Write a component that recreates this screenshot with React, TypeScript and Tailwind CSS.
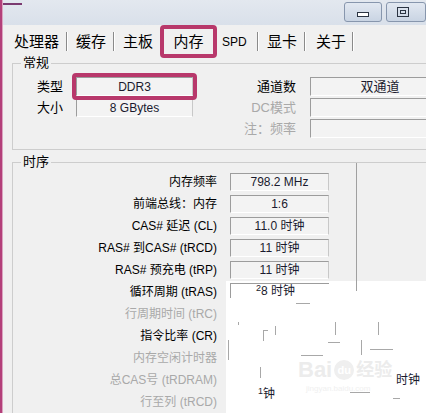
import React from "react";

const FONT = "font-['Liberation_Sans','Noto_Sans_CJK_SC',sans-serif]";

type Row = { l: string; v?: string; grey?: boolean };

const timing: Row[] = [
  { l: "内存频率", v: "798.2 MHz" },
  { l: "前端总线：内存", v: "1:6" },
  { l: "CAS# 延迟 (CL)", v: "11.0 时钟" },
  { l: "RAS# 到CAS# (tRCD)", v: "11 时钟" },
  { l: "RAS# 预充电 (tRP)", v: "11 时钟" },
  { l: "循环周期 (tRAS)" },
  { l: "行周期时间 (tRC)", grey: true },
  { l: "指令比率 (CR)" },
  { l: "内存空闲计时器", grey: true },
  { l: "总CAS号 (tRDRAM)", grey: true },
  { l: "行至列 (tRCD)", grey: true },
];

function Field({ children, w, h }: { children?: React.ReactNode; w: string; h: string }) {
  return (
    <div
      className={
        "flex items-center justify-center border-t border-l border-r border-b border-t-[#9c9c9c] border-l-[#9c9c9c] border-r-[#c8c8c8] border-b-white bg-[#f3f3f3] text-[12px] text-[#1a1a2e] " +
        w +
        " " +
        h
      }
    >
      {children}
    </div>
  );
}

function Sep() {
  return (
    <div className="flex shrink-0">
      <div className="w-px h-[19px] bg-[#8a8a8a]" />
      <div className="w-px h-[19px] bg-white" />
    </div>
  );
}

function Noise({ x, y, w, h }: { x: number; y: number; w: number; h: number }) {
  return (
    <div
      className="absolute bg-[#a8a8a8]"
      style={{ left: x, top: y, width: w, height: h }}
    />
  );
}

export default function App() {
  return (
    <div className={"w-[426px] h-[413px] overflow-hidden flex bg-[#f0f0f0] text-black " + FONT}>
      <div className="w-[3px] shrink-0 bg-[#b3407a] border-r border-[#dba3c0]" />
      <div className="flex-1 min-w-0 flex flex-col">
        {/* title bar */}
        <div className="h-[25px] shrink-0 flex items-start bg-gradient-to-b from-[#e3e8ef] to-[#d9e0ea]">
          <div className="mt-[3px] w-[19px] h-[2px] bg-[#7b3a70]" />
          <div className="flex-1" />
          <div className="mt-[2px] w-[38px] h-[20px] rounded-[3px] border border-[#8796ad] bg-gradient-to-b from-[#e2e8f1] to-[#c9d4e3] flex items-center justify-center">
            <div className="mt-[5px] w-[12px] h-[5px] border border-[#2b3442] bg-white" />
          </div>
          <div className="ml-[4px] mt-[2px] w-[40px] h-[20px] shrink-0 rounded-[3px] border border-[#8796ad] bg-gradient-to-b from-[#e2e8f1] to-[#c9d4e3] flex items-start justify-start">
            <div className="ml-[10px] mt-[4px] w-[12px] h-[10px] border border-[#2b3442] flex items-center justify-center">
              <div className="w-[6px] h-[4px] border border-[#2b3442]" />
            </div>
          </div>
        </div>

        {/* tabs */}
        <div className="h-[33px] shrink-0 flex items-center text-[15px] leading-none">
          <span className="ml-[11px] w-[49px]">处理器</span>
          <div className="ml-[3px]"><Sep /></div>
          <span className="ml-[8px] w-[31px]">缓存</span>
          <div className="ml-[6px]"><Sep /></div>
          <span className="ml-[8px] w-[31px]">主板</span>
          <div className="ml-[6px] w-[57px] h-[33px] shrink-0 rounded-[4px] border-[4px] border-[#b8386b] flex items-center justify-center">
            <span>内存</span>
          </div>
          <span className="ml-[5px] w-[24px] text-[12px]">SPD</span>
          <div className="ml-[11px]"><Sep /></div>
          <span className="ml-[8px] w-[30px]">显卡</span>
          <div className="ml-[7px]"><Sep /></div>
          <span className="ml-[10px] w-[30px]">关于</span>
          <div className="ml-[6px]"><Sep /></div>
        </div>

        {/* 常规 group */}
        <div className="relative ml-[9px] mt-[5px] w-[430px] h-[87px] shrink-0 border border-[#cdcdcd] pt-[13px]">
          <span className="absolute -top-[8px] left-[8px] px-[2px] bg-[#f0f0f0] text-[13px] leading-[14px]">常规</span>
          <div className="flex flex-col gap-[2px] text-[13px]">
            <div className="flex items-center h-[19px]">
              <span className="w-[50px] text-right">类型</span>
              <div className="relative ml-[13px]">
                <Field w="w-[117px]" h="h-[19px]">DDR3</Field>
                <div className="absolute -left-[4px] -top-[4px] w-[125px] h-[27px] rounded-[4px] border-[4px] border-[#b8386b]" />
              </div>
              <span className="w-[103px] text-right">通道数</span>
              <div className="ml-[14px]">
                <Field w="w-[130px]" h="h-[19px]"><span className="text-[13px] ml-[10px]">双通道</span></Field>
              </div>
            </div>
            <div className="flex items-center h-[19px]">
              <span className="w-[50px] text-right">大小</span>
              <div className="ml-[13px]">
                <Field w="w-[117px]" h="h-[19px]">8 GBytes</Field>
              </div>
              <span className="w-[103px] text-right text-[#a9a9a9]">DC模式</span>
              <div className="ml-[14px]">
                <Field w="w-[130px]" h="h-[19px]" />
              </div>
            </div>
            <div className="flex items-center h-[19px]">
              <span className="w-[50px]" />
              <div className="ml-[13px] w-[117px]" />
              <span className="w-[103px] text-right text-[#a9a9a9]">注：频率</span>
              <div className="ml-[14px]">
                <Field w="w-[130px]" h="h-[19px]" />
              </div>
            </div>
          </div>
        </div>

        {/* 时序 group */}
        <div className="relative ml-[9px] mt-[12px] w-[430px] h-[300px] shrink-0 border border-[#cdcdcd] flex">
          <span className="absolute -top-[8px] left-[8px] px-[2px] bg-[#f0f0f0] text-[13px] leading-[14px]">时序</span>
          <div className="w-[204px] shrink-0 pt-[8px] flex flex-col text-[12px]">
            {timing.map((r) => (
              <div
                key={r.l}
                className={"h-[22px] flex items-center justify-end whitespace-nowrap " + (r.grey ? "text-[#a9a9a9]" : "text-black")}
              >
                {r.l}
              </div>
            ))}
          </div>
          <div className="flex-1 flex flex-col">
            <div className="h-[118px] shrink-0 flex">
              <div className="pl-[13px] pt-[10px] flex flex-col gap-[4px]">
                {timing.slice(0, 5).map((r) => (
                  <Field key={r.l} w="w-[99px]" h="h-[18px]">
                    {r.v}
                  </Field>
                ))}
              </div>
              <div className="w-[27px]" />
              <div className="w-px bg-[#a0a0a0]" />
            </div>
            <div className="flex-1 flex">
              <div className="w-[9px]" />
              <div className="relative flex-1 bg-white overflow-hidden">
                {/* 循环周期 field remains */}
                <div className="absolute left-[4px] top-[2px] w-[99px] h-px bg-[#9c9c9c]" />
                <div className="absolute left-[4px] top-[2px] w-px h-[15px] bg-[#9c9c9c]" />
                <div className="absolute left-[130px] top-0 w-px h-[10px] bg-[#a0a0a0]" />
                <span className="absolute left-[30px] top-[3px] text-[12px] leading-[14px] text-[#1a1a2e]">
                  <sup className="text-[9px]">2</sup>8 时钟
                </span>
                <span className="absolute left-[32px] top-[106px] text-[12px] leading-[14px] text-[#1a1a2e]">
                  <sup className="text-[9px]">1</sup>钟
                </span>
                <span className="absolute left-[170px] top-[92px] text-[12px] leading-[14px] text-[#1a1a2e]">时钟</span>
                {/* watermark */}
                <div className="absolute left-[72px] top-[78px] flex items-center gap-[2px] text-[#ececec] font-bold">
                  <span className="text-[22px] leading-none">Bai</span>
                  <span className="w-[20px] h-[20px] rounded-full bg-[#efefef] text-white text-[11px] flex items-center justify-center">du</span>
                  <span className="text-[18px] leading-none">经验</span>
                </div>
                <span className="absolute left-[80px] top-[102px] text-[8px] text-[#f0f0f0]">jingyan.baidu.com</span>
                {/* noise */}
                <Noise x={70} y={22} w={14} h={1} />
                <Noise x={12} y={41} w={1} h={3} />
                <Noise x={37} y={49} w={1} h={11} />
                <Noise x={37} y={49} w={5} h={1} />
                <Noise x={49} y={45} w={1} h={9} />
                <Noise x={109} y={41} w={1} h={13} />
                <Noise x={102} y={61} w={12} h={1} />
                <Noise x={135} y={59} w={1} h={15} />
                <Noise x={144} y={68} w={23} h={1} />
                <Noise x={152} y={41} w={1} h={13} />
                <Noise x={75} y={74} w={22} h={1} />
                <Noise x={34} y={86} w={1} h={11} />
                <Noise x={2} y={59} w={1} h={20} />
                <Noise x={124} y={111} w={20} h={1} />
                <Noise x={167} y={117} w={7} h={1} />
              </div>
            </div>
          </div>
        </div>
      </div>
    </div>
  );
}
